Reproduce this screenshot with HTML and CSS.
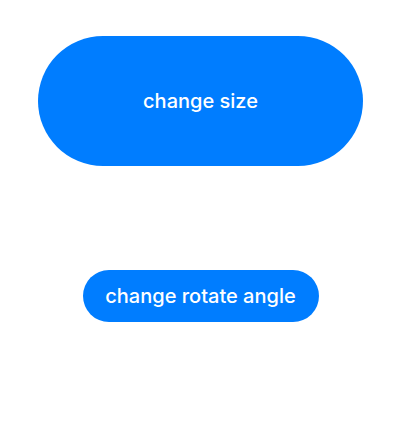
FILE: index.html
```html
<!DOCTYPE html>
<html>
<head>
<meta charset="utf-8">
<link rel="stylesheet" href="styles.css">
</head>
<body>
<main class="page">
  <button class="btn btn-size">change size</button>
  <button class="btn btn-rotate">change rotate angle</button>
</main>
</body>
</html>
```

FILE: styles.css
```css
html, body {
  margin: 0;
  padding: 0;
  background: #ffffff;
}
.page {
  display: flex;
  flex-direction: column;
  align-items: center;
  padding-top: 36px;
  padding-right: 2px;
  gap: 104px;
}
.btn {
  border: none;
  background: #007dff;
  color: #ffffff;
  font-family: Inter, "Noto Sans", sans-serif;
  font-size: 20px;
  font-weight: 500;
  border-radius: 999px;
  padding: 0;
  display: flex;
  align-items: center;
  justify-content: center;
}
.btn-size {
  width: 325px;
  height: 130px;
}
.btn-rotate {
  width: 236px;
  height: 52px;
}
```
